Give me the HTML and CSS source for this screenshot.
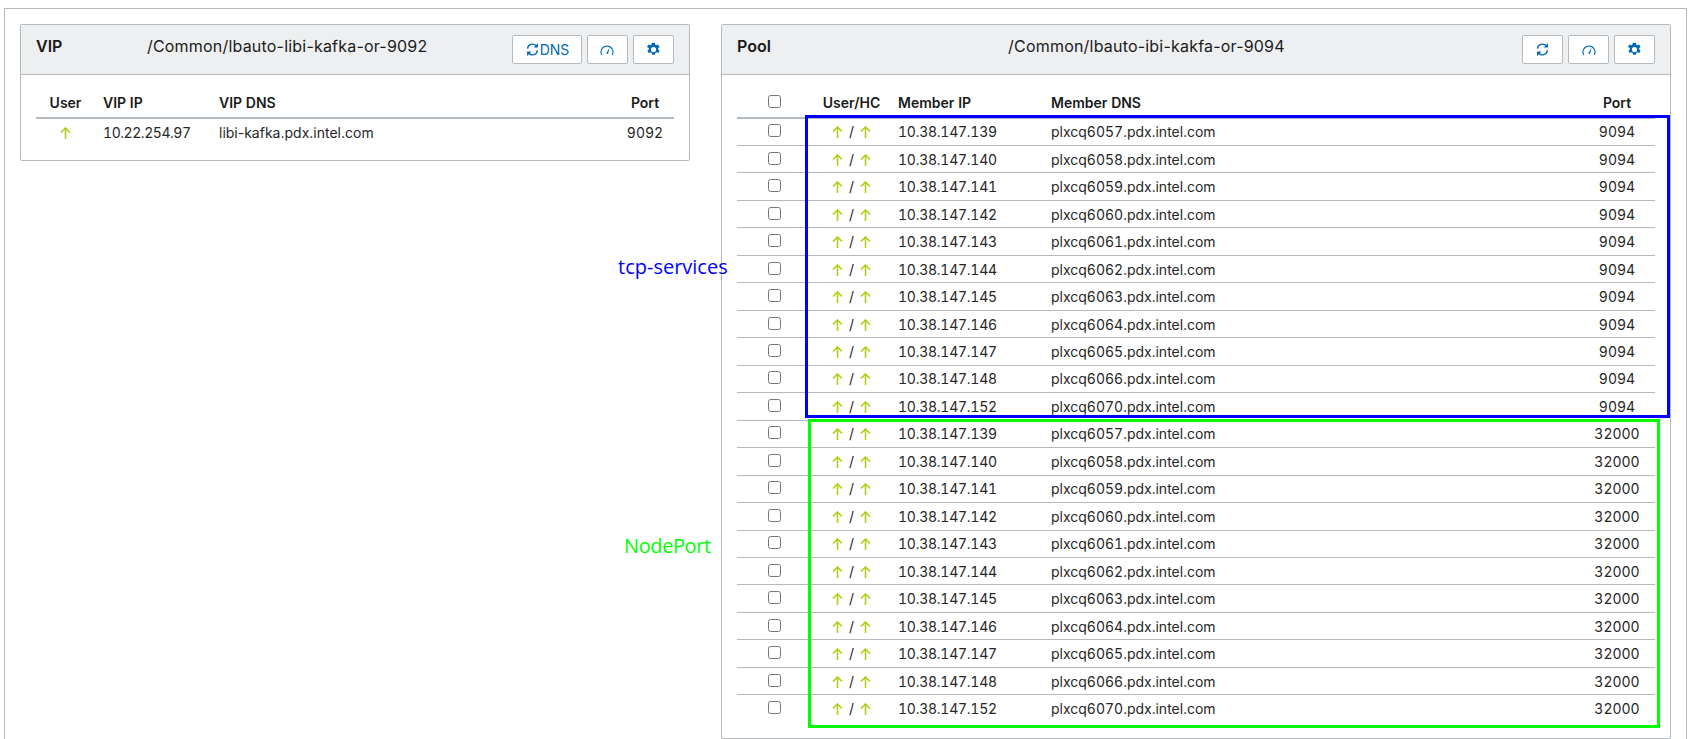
FILE: index.html
```html
<!DOCTYPE html>
<html lang="en">
<head>
    <meta charset="UTF-8">
    <title>VIP / Pool</title>
    <link rel="stylesheet" href="styles.css">
</head>
<body>
    <svg class="defs" width="0" height="0">
        <symbol id="up" viewBox="0 0 11 12"><path d="M5.500 12V1M1 5.500 5.500 1 10 5.500" fill="none" stroke="currentColor" stroke-width="1.6"/></symbol>
        <symbol id="sync" viewBox="0 0 16 16"><path d="M2.700 7a5.400 5.400 0 0 1 9.300-3M13.300 9a5.400 5.400 0 0 1-9.300 3" fill="none" stroke="currentColor" stroke-width="1.500"/><path d="M13.800 1.200v4.600H9.200zM2.200 14.800v-4.600h4.600z" fill="currentColor"/></symbol>
        <symbol id="gauge" viewBox="0 0 14 12"><path d="M1.800 11a6 6 0 1 1 10.400 0" fill="none" stroke="currentColor" stroke-width="1.100"/><path d="M6.200 9.500 9.600 3.500 8 10z" fill="currentColor"/></symbol>
        <symbol id="gear" viewBox="0 0 16 16"><path fill-rule="evenodd" fill="currentColor" d="M6.500.8h3l.4 2 1.200.6 1.900-.8 1.500 2.600-1.500 1.300v1.400l1.500 1.300-1.500 2.600-1.900-.8-1.200.6-.4 2h-3l-.4-2-1.200-.6-1.900.8-1.500-2.600 1.500-1.300V6.500L1 5.200l1.500-2.600 1.900.8 1.200-.6zM8 5.200a2.800 2.800 0 1 0 0 5.600a2.800 2.800 0 0 0 0-5.600z"/></symbol>
    </svg>

    <div class="frame">
        <section class="panel vip">
            <header class="panel-head">
                <strong>VIP</strong>
                <span class="panel-title">/Common/lbauto-libi-kafka-or-9092</span>
                <div class="tools">
                    <button class="wide"><svg class="ico"><use href="#sync"/></svg>DNS</button>
                    <button><svg class="ico-g"><use href="#gauge"/></svg></button>
                    <button><svg class="ico"><use href="#gear"/></svg></button>
                </div>
            </header>
            <table>
                <thead>
                    <tr><th class="c-user">User</th><th class="c-vip">VIP IP</th><th>VIP DNS</th><th class="c-port">Port</th></tr>
                </thead>
                <tbody>
                    <tr><td class="c-user"><svg class="up"><use href="#up"/></svg></td><td class="ip">10.22.254.97</td><td class="plain">libi-kafka.pdx.intel.com</td><td class="c-port">9092</td></tr>
                </tbody>
            </table>
        </section>

        <section class="panel pool">
            <header class="panel-head">
                <strong>Pool</strong>
                <span class="panel-title">/Common/lbauto-ibi-kakfa-or-9094</span>
                <div class="tools">
                    <button><svg class="ico"><use href="#sync"/></svg></button>
                    <button><svg class="ico-g"><use href="#gauge"/></svg></button>
                    <button><svg class="ico"><use href="#gear"/></svg></button>
                </div>
            </header>
            <table>
                <thead>
                    <tr><th class="c-check"><input type="checkbox"></th><th class="c-hc">User/HC</th><th class="c-ip">Member IP</th><th>Member DNS</th><th class="c-port">Port</th></tr>
                </thead>
                <tbody id="members"></tbody>
            </table>
        </section>

        <div class="mark mark-tcp"></div>
        <div class="mark mark-node"></div>
        <span class="mark-label label-tcp">tcp-services</span>
        <span class="mark-label label-node">NodePort</span>
    </div>

    <script>
        var hosts = [
            ["10.38.147.139", "plxcq6057"], ["10.38.147.140", "plxcq6058"], ["10.38.147.141", "plxcq6059"],
            ["10.38.147.142", "plxcq6060"], ["10.38.147.143", "plxcq6061"], ["10.38.147.144", "plxcq6062"],
            ["10.38.147.145", "plxcq6063"], ["10.38.147.146", "plxcq6064"], ["10.38.147.147", "plxcq6065"],
            ["10.38.147.148", "plxcq6066"], ["10.38.147.152", "plxcq6070"]
        ];
        var up = '<svg class="up"><use href="#up"/></svg>';
        var html = "";
        [9094, 32000].forEach(function (port) {
            hosts.forEach(function (h) {
                html += '<tr><td class="c-check"><input type="checkbox"></td>' +
                    '<td class="c-hc">' + up + '<span class="sep">/</span>' + up + '</td>' +
                    '<td class="ip">' + h[0] + '</td><td>' + h[1] + '.pdx.intel.com</td>' +
                    '<td class="c-port">' + port + '</td></tr>';
            });
        });
        document.getElementById("members").innerHTML = html;
    </script>
</body>
</html>
```

FILE: styles.css
```css
* {
    margin: 0;
    padding: 0;
    box-sizing: border-box;
}

html, body {
    height: 739px;
    overflow: hidden;
}

body {
    font-family: Inter, "Open Sans", Arial, sans-serif;
    font-size: 14px;
    font-variant-numeric: tabular-nums;
    color: #262626;
    background: #fff;
    padding: 8px 4px 0 4px;
}

.defs {
    position: absolute;
}

.frame {
    position: relative;
    height: 760px;
    border: 1px solid #b2b9bf;
    padding: 15px 16px 0 15px;
    display: grid;
    grid-template-columns: 670px 950px;
    column-gap: 31px;
    align-items: start;
}

.panel {
    border: 1px solid #b2b9bf;
    border-radius: 2px;
    background: #fff;
}

.vip {
    height: 137px;
}

.pool {
    height: 715px;
}

.panel-head {
    height: 50px;
    padding: 10px 15px 0 15px;
    background: #edeff1;
    border-bottom: 1px solid #b2b9bf;
    display: flex;
    justify-content: space-between;
    align-items: flex-start;
    font-size: 16px;
    line-height: 22px;
    color: #1a1a1a;
}

.panel-head strong {
    font-weight: 600;
}

.panel-title {
    font-variant-numeric: normal;
    letter-spacing: 0.2px;
}

.tools {
    display: flex;
    gap: 5px;
}

.tools button {
    width: 41px;
    height: 29px;
    background: #fff;
    border: 1px solid #b2b9bf;
    border-radius: 2px;
    color: #0068b5;
    font-family: inherit;
    font-size: 14px;
    display: flex;
    align-items: center;
    justify-content: center;
}

.tools .wide {
    width: 70px;
}

.ico {
    width: 15px;
    height: 15px;
}

.ico-g {
    width: 14px;
    height: 12px;
}

table {
    border-collapse: collapse;
    table-layout: fixed;
    width: calc(100% - 30px);
    margin: 16px 15px 0 15px;
}

th {
    height: 27px;
    padding-bottom: 3px;
    font-weight: 600;
    text-align: left;
    color: #1a1a1a;
    border-bottom: 2px solid #b2b9bf;
    vertical-align: middle;
}

td {
    height: 27.48px;
    border-top: 1px solid #b2b9bf;
    vertical-align: middle;
}

tbody tr:first-child td {
    border-top: 0;
}

.ip {
    letter-spacing: -0.25px;
}

.vip .ip {
    letter-spacing: -0.45px;
}

.plain {
    font-variant-numeric: normal;
}

.c-port {
    width: 76px;
    text-align: center;
}

.vip .c-port {
    width: 58px;
}

.c-user {
    width: 67px;
    text-align: center;
    padding-right: 8px;
}

.c-vip {
    width: 116px;
}

.c-check {
    width: 75px;
    text-align: center;
}

.c-check input {
    display: block;
    margin: 0 auto;
    position: relative;
    top: -1px;
}

.c-hc {
    width: 86px;
    padding-right: 7px;
    text-align: center;
    white-space: nowrap;
}

.c-ip {
    width: 153px;
}

.up {
    width: 11px;
    height: 12px;
    color: #b5cc18;
    vertical-align: -1px;
}

.sep {
    margin: 0 6px;
}

/* annotations drawn over the screenshot */
.mark {
    position: absolute;
    border: 3px solid;
}

.mark-tcp {
    left: 800px;
    top: 106px;
    width: 865px;
    height: 303px;
    border-color: #0000ff;
}

.mark-node {
    left: 803px;
    top: 410px;
    width: 852px;
    height: 309px;
    border-color: #00ff00;
}

.mark-label {
    position: absolute;
    font-family: "Open Sans", Arial, sans-serif;
    font-size: 20px;
    line-height: 24px;
}

.label-tcp {
    left: 613px;
    top: 246px;
    color: #0000ff;
}

.label-node {
    left: 619px;
    top: 525px;
    letter-spacing: -0.4px;
    color: #00ff00;
}
```
